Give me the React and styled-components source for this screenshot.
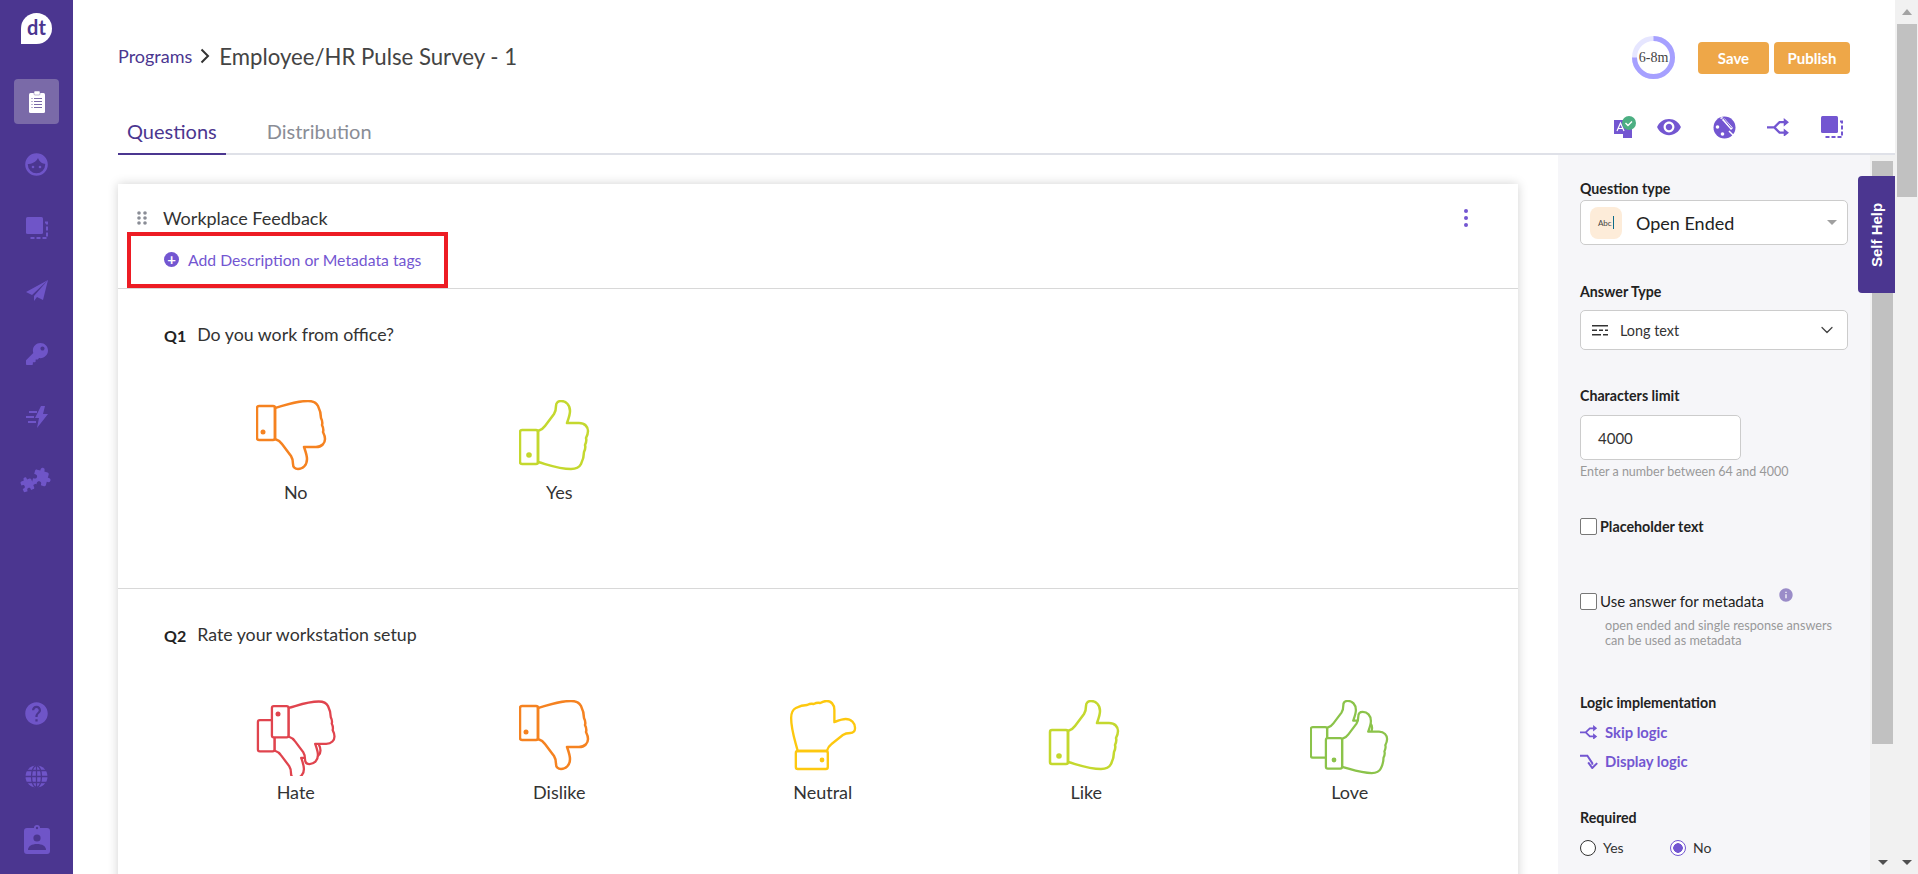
import styled, { createGlobalStyle } from 'styled-components';
import { FaKey } from 'react-icons/fa';
import { MdHelp, MdVisibility, MdInfo, MdExtension } from 'react-icons/md';
import { ChevronDown } from 'lucide-react';

//Survey builder screen: sidebar, header, question card and the settings panel.

const PURPLE = '#7356d1';
const SIDE_ICON = '#6f55c8';
const NAVY = '#4b3690';

const HAND =
  'M19 31C22 30 24 29 26 26L35 14C37 11 37 8 37 6C37 3 39 1 42 1C47 1 51 5 51 11C51 15 49 20 48 23L60 23C66 23 69 27 69 31C69 34 68 36 67 38C68 41 67 43 66 45C67 48 66 50 65 52C65 56 64 60 62 64C60 68 57 69 52 69C40 69 30 65 19 62Z';

const Thumb = ({ transform, fill = 'none' }) => (
  <g transform={transform}>
    <path d={HAND} fill={fill} />
    <rect x="1" y="30" width="18" height="34" rx="2" fill={fill} />
  </g>
);

const FaceIcon = ({ kind, color }) => {
  const common = { fill: 'none', stroke: color, strokeWidth: 2.5, strokeLinejoin: 'round' };
  return (
    <svg width="80" height="76" viewBox="0 0 80 76">
      {kind === 'down' && (
        <g {...common}>
          <Thumb transform="matrix(1 0 0 -1 0 70)" />
          <circle cx="7" cy="32" r="2.500" fill={color} stroke="none" />
        </g>
      )}
      {kind === 'up' && (
        <g {...common}>
          <Thumb transform="translate(0 0)" />
          <circle cx="10" cy="55" r="2.800" fill={color} stroke="none" />
        </g>
      )}
      {kind === 'like' && (
        <g {...common}>
          <Thumb transform="translate(3 0)" />
          <circle cx="13" cy="56" r="2.800" fill={color} stroke="none" />
        </g>
      )}
      {kind === 'neutral' && (
        <g {...common}>
          <Thumb transform="matrix(0 -1 -.94 0 73 70)" />
          <circle cx="39" cy="60" r="2.400" fill={color} stroke="none" />
        </g>
      )}
      {kind === 'hate' && (
        <g {...common}>
          <Thumb transform="matrix(.92 0 0 -.92 1 79)" fill="#fff" />
          <Thumb transform="matrix(.92 0 0 -.92 15 65)" fill="#fff" />
          <circle cx="22" cy="14" r="2.500" fill={color} stroke="none" />
        </g>
      )}
      {kind === 'love' && (
        <g {...common}>
          <Thumb transform="matrix(.9 0 0 .9 0 0)" fill="#fff" />
          <Thumb transform="matrix(.9 0 0 .9 15 11)" fill="#fff" />
          <circle cx="24" cy="60" r="2.400" fill={color} stroke="none" />
        </g>
      )}
    </svg>
  );
};

const CopyIcon = ({ color, size }) => (
  <svg width={size} height={size} viewBox="0 0 22 22">
    <rect x="0" y="0" width="17" height="17" rx="1.5" fill={color} />
    <path d="M19 5.5h2V21H5.5v-2.5" fill="none" stroke={color} strokeWidth="2" strokeDasharray="4 2" />
  </svg>
);

const BranchIcon = ({ color, size }) => (
  <svg width={size} height={size * 0.82} viewBox="0 0 22 18" fill="none" stroke={color} strokeWidth="2.2">
    <path d="M0 9h7l5-5h5M7 9l5 5h5" />
    <path d="M16 0l5 4-5 4zM16 10l5 4-5 4z" fill={color} stroke="none" />
  </svg>
);

const DisplayIcon = () => (
  <svg width="18" height="15" viewBox="0 0 22 18" fill="none" stroke={PURPLE} strokeWidth="2.4">
    <path d="M0 2h9l6 9v2" />
    <path d="M10 10l5 7 6-6" />
  </svg>
);

const PlaneIcon = () => (
  <svg width="22" height="22" viewBox="0 0 22 22" fill={SIDE_ICON}>
    <path d="M22 0L0 12l6 3zM22 0L8 16v5l3-4 6 3z" />
  </svg>
);

const FaceNavIcon = () => (
  <svg width="23" height="23" viewBox="0 0 23 23">
    <circle cx="11.5" cy="11.5" r="10" fill="none" stroke={SIDE_ICON} strokeWidth="2.6" />
    <path d="M2 11C7 11 11 9 13 5c1 3 4 6 8 6A9.500 9.500 0 0 0 2 11z" fill={SIDE_ICON} />
    <circle cx="8" cy="14" r="1.300" fill={SIDE_ICON} />
    <circle cx="15" cy="14" r="1.300" fill={SIDE_ICON} />
  </svg>
);

const BoltIcon = () => (
  <svg width="22" height="22" viewBox="0 0 22 22" fill={SIDE_ICON}>
    <path d="M15 0L9 12h4l-2 10 11-14h-5l2-8z" />
    <path d="M3 5h8v2H3zM0 10h8v2H0zM2 15h8v2H2z" />
  </svg>
);

const GlobeIcon = () => (
  <svg width="23" height="23" viewBox="0 0 23 23">
    <circle cx="11.5" cy="11.5" r="11" fill={SIDE_ICON} />
    <g fill="none" stroke={NAVY} strokeWidth="1.300">
      <ellipse cx="11.5" cy="11.5" rx="5" ry="11" />
      <path d="M11.500 0v23M0 11.500h23M2 5.500h19M2 17.500h19" />
    </g>
  </svg>
);

const BadgeIcon = () => (
  <svg width="26" height="29" viewBox="0 0 26 29">
    <path
      d="M3 3h7a3 3 0 0 1 6 0h7a3 3 0 0 1 3 3v20a3 3 0 0 1-3 3H3a3 3 0 0 1-3-3V6a3 3 0 0 1 3-3z"
      fill={SIDE_ICON}
    />
    <circle cx="13" cy="3" r="1.200" fill={NAVY} />
    <circle cx="13" cy="13" r="3.600" fill={NAVY} />
    <path d="M4 25c0-4 4-6 9-6s9 2 9 6z" fill={NAVY} />
  </svg>
);

const ClipboardIcon = () => (
  <svg width="16" height="22" viewBox="0 0 16 22">
    <rect x="0" y="2" width="16" height="20" rx="1.5" fill="#fff" />
    <rect x="5" y="0" width="6" height="4" rx="1" fill="#fff" stroke="#7a6aa8" strokeWidth=".5" />
    <path d="M5 7.500h8M5 10.500h8M5 13.500h8M5 16.500h8M2.500 7.500h1M2.500 10.500h1M2.500 13.500h1M2.500 16.500h1" stroke="#7a6aa8" strokeWidth="1" />
  </svg>
);

const TranslateIcon = () => (
  <svg width="23" height="22" viewBox="0 0 23 22">
    <rect x="0" y="4" width="13" height="14" fill={PURPLE} />
    <rect x="9" y="10" width="9" height="12" fill={PURPLE} />
    <path d="M3 15l3.500-8L10 15M4.500 12.500h4" fill="none" stroke="#fff" strokeWidth="1.200" />
    <circle cx="15" cy="7" r="7" fill="#4caf82" />
    <path d="M11.500 7l2.500 2.500 4-4" fill="none" stroke="#fff" strokeWidth="1.400" />
  </svg>
);

const PaletteIcon = () => (
  <svg width="23" height="23" viewBox="0 0 23 23">
    <circle cx="11.5" cy="11.5" r="11" fill={PURPLE} />
    <circle cx="4.500" cy="11" r="1.800" fill="#fff" />
    <circle cx="9.500" cy="18" r="1.800" fill="#fff" />
    <path d="M7 2l2-1 3 2 8 9-2 2-8-9z" fill="#fff" />
    <path d="M8 3.500l2.500-1 8 9.500" fill="none" stroke={PURPLE} strokeWidth="1" />
    <path d="M16 15l5 5" stroke="#fff" strokeWidth="1.500" />
  </svg>
);

const TimeRing = () => (
  <svg width="43" height="43" viewBox="0 0 43 43">
    <circle cx="21.5" cy="21.5" r="19" fill="none" stroke="#e6e6ff" strokeWidth="5" />
    <circle
      cx="21.5"
      cy="21.5"
      r="19"
      fill="none"
      stroke="#a6a0ff"
      strokeWidth="5"
      pathLength="100"
      strokeDasharray="75 25"
      transform="rotate(-90 21.5 21.5)"
    />
  </svg>
);

const DragDots = () => (
  <svg width="10" height="14" viewBox="0 0 10 14" fill="#8a8d96">
    <circle cx="2" cy="2" r="1.800" />
    <circle cx="8" cy="2" r="1.800" />
    <circle cx="2" cy="7" r="1.800" />
    <circle cx="8" cy="7" r="1.800" />
    <circle cx="2" cy="12" r="1.800" />
    <circle cx="8" cy="12" r="1.800" />
  </svg>
);

const PuzzleIcon = () => (
  <PuzzlePair>
    <MdExtension size={16} color={SIDE_ICON} />
    <MdExtension size={20} color={SIDE_ICON} />
  </PuzzlePair>
);

const NAV = [
  { id: 'programs', icon: <ClipboardIcon />, active: true },
  { id: 'people', icon: <FaceNavIcon /> },
  { id: 'templates', icon: <CopyIcon color={SIDE_ICON} size={22} /> },
  { id: 'send', icon: <PlaneIcon /> },
  { id: 'keys', icon: <FaKey size={22} color={SIDE_ICON} /> },
  { id: 'automation', icon: <BoltIcon /> },
  { id: 'integrations', icon: <PuzzleIcon /> },
];

const QUESTIONS = [
  {
    id: 'Q1',
    text: 'Do you work from office?',
    options: [
      { label: 'No', kind: 'down', color: '#f58220' },
      { label: 'Yes', kind: 'up', color: '#c4d82e' },
    ],
  },
  {
    id: 'Q2',
    text: 'Rate your workstation setup',
    options: [
      { label: 'Hate', kind: 'hate', color: '#e0444e' },
      { label: 'Dislike', kind: 'down', color: '#f58220' },
      { label: 'Neutral', kind: 'neutral', color: '#fdc80f' },
      { label: 'Like', kind: 'like', color: '#c4d82e' },
      { label: 'Love', kind: 'love', color: '#8bc34a' },
    ],
  },
];

export default function App() {
  return (
    <Page>
      <GlobalStyle />
      <Sidebar>
        <div>
          <Logo>dt</Logo>
          <NavList>
            {NAV.map((item) => (
              <NavItem key={item.id}>
                <NavTile $active={item.active}>{item.icon}</NavTile>
              </NavItem>
            ))}
          </NavList>
        </div>
        <BottomNav>
          <BottomItem>
            <MdHelp size={27} color={SIDE_ICON} />
          </BottomItem>
          <BottomItem>
            <GlobeIcon />
          </BottomItem>
          <BottomItem>
            <BadgeIcon />
          </BottomItem>
        </BottomNav>
      </Sidebar>

      <Main>
        <Header>
          <TopRow>
            <Crumbs>
              <CrumbLink>Programs</CrumbLink>
              <CrumbArrow viewBox="0 0 10 16" width="10" height="16">
                <path d="M1.500 1.500L8 8l-6.500 6.500" fill="none" stroke="#333" strokeWidth="2" />
              </CrumbArrow>
              <PageTitle>Employee/HR Pulse Survey - 1</PageTitle>
            </Crumbs>
            <Actions>
              <Ring>
                <TimeRing />
                <RingText>6-8m</RingText>
              </Ring>
              <ActionButton>Save</ActionButton>
              <ActionButton $wide>Publish</ActionButton>
            </Actions>
          </TopRow>
          <TabRow>
            <Tabs>
              <Tab $active>Questions</Tab>
              <Tab>Distribution</Tab>
            </Tabs>
            <Tools>
              <TranslateSlot>
                <TranslateIcon />
              </TranslateSlot>
              <MdVisibility size={26} color={PURPLE} />
              <PaletteIcon />
              <BranchIcon color={PURPLE} size={23} />
              <CopyIcon color={PURPLE} size={22} />
            </Tools>
          </TabRow>
        </Header>

        <Body>
          <Content>
            <Card>
              <CardHead>
                <TitleRow>
                  <DragDots />
                  <SectionTitle>Workplace Feedback</SectionTitle>
                  <Kebab>
                    <i />
                    <i />
                    <i />
                  </Kebab>
                </TitleRow>
                <AddMeta>
                  <PlusDot>+</PlusDot>
                  <span>Add Description or Metadata tags</span>
                </AddMeta>
              </CardHead>
              {QUESTIONS.map((q) => (
                <Question key={q.id}>
                  <QuestionLine>
                    <QuestionId>{q.id}</QuestionId>
                    <QuestionText>{q.text}</QuestionText>
                  </QuestionLine>
                  <Options>
                    {q.options.map((o) => (
                      <Option key={o.label}>
                        <FaceIcon kind={o.kind} color={o.color} />
                        <OptionLabel>{o.label}</OptionLabel>
                      </Option>
                    ))}
                  </Options>
                </Question>
              ))}
            </Card>
          </Content>

          <Panel>
            <PanelLabel>Question type</PanelLabel>
            <TypeSelect>
              <AbcTile>
                Abc<b />
              </AbcTile>
              <TypeName>Open Ended</TypeName>
              <Caret />
            </TypeSelect>

            <PanelLabel $top={38}>Answer Type</PanelLabel>
            <AnswerSelect>
              <svg width="16" height="11" viewBox="0 0 16 11" fill="#333">
                <path d="M0 0h16v1.500H0zM0 4.500h5V6H0zM7 4.500h4V6H7zM13 4.500h3V6h-3zM0 9h9v1.500H0zM11 9h5v1.500h-5z" />
              </svg>
              <AnswerName>Long text</AnswerName>
              <ChevronDown size={20} strokeWidth={1.5} color="#444" />
            </AnswerSelect>

            <PanelLabel $top={37}>Characters limit</PanelLabel>
            <LimitInput>4000</LimitInput>
            <Hint>Enter a number between 64 and 4000</Hint>

            <CheckRow $top={39}>
              <CheckBox />
              <CheckLabel $strong>Placeholder text</CheckLabel>
            </CheckRow>

            <CheckRow $top={57}>
              <CheckBox />
              <CheckLabel>Use answer for metadata</CheckLabel>
              <InfoBadge>
                <MdInfo size={16} color="#9a8cc8" />
              </InfoBadge>
            </CheckRow>
            <CheckHelp>
              open ended and single response answers
              <br />
              can be used as metadata
            </CheckHelp>

            <PanelLabel $top={46}>Logic implementation</PanelLabel>
            <LogicLink $top={10}>
              <BranchIcon color={PURPLE} size={18} />
              <span>Skip logic</span>
            </LogicLink>
            <LogicLink $top={9}>
              <DisplayIcon />
              <span>Display logic</span>
            </LogicLink>

            <PanelLabel $top={38}>Required</PanelLabel>
            <RadioRow>
              <RadioItem>
                <Radio />
                Yes
              </RadioItem>
              <RadioItem>
                <Radio $on />
                No
              </RadioItem>
            </RadioRow>
          </Panel>

          <InnerBar>
            <InnerThumb />
            <ArrowDown />
          </InnerBar>

          <SelfHelp>Self Help</SelfHelp>
        </Body>
      </Main>

      <OuterBar>
        <ArrowUp />
        <OuterThumb />
        <ArrowDown />
      </OuterBar>
    </Page>
  );
}

//STYLING
const GlobalStyle = createGlobalStyle`
  html, body {
    margin: 0;
    height: 100%;
    overflow: hidden;
    background: #fff;
    font-family: Lato, 'Open Sans', sans-serif;
    color: #333;
  }
`;

const Page = styled.div`
  display: flex;
  width: 1918px;
  height: 874px;
  overflow: hidden;
`;

const Sidebar = styled.aside`
  width: 73px;
  flex: none;
  background: ${NAVY};
  display: flex;
  flex-direction: column;
  justify-content: space-between;
  padding-bottom: 3px;
  box-sizing: border-box;
`;

const Logo = styled.div`
  width: 31px;
  height: 31px;
  margin: 13px 0 26px 21px;
  background: #fff;
  border-radius: 50% 50% 50% 0;
  color: ${NAVY};
  font-size: 20px;
  font-weight: 700;
  line-height: 29px;
  text-align: center;
`;

const NavList = styled.nav`
  display: flex;
  flex-direction: column;
`;

const NavItem = styled.div`
  height: 63px;
  display: flex;
  align-items: center;
  justify-content: center;
`;

const NavTile = styled.div`
  width: 45px;
  height: 45px;
  border-radius: 4px;
  display: flex;
  align-items: center;
  justify-content: center;
  background: ${(p) => (p.$active ? '#7a6aa8' : 'transparent')};
`;

const PuzzlePair = styled.span`
  display: flex;
  align-items: flex-end;
  margin-left: -2px;

  svg:first-child {
    margin-right: -4px;
    transform: rotate(-20deg);
  }
  svg:last-child {
    margin-bottom: 5px;
    transform: rotate(15deg);
  }
`;

const BottomNav = styled.div`
  display: flex;
  flex-direction: column;
`;

const BottomItem = styled.div`
  height: 63px;
  display: flex;
  align-items: center;
  justify-content: center;
`;

const Main = styled.main`
  flex: 1;
  min-width: 0;
  display: flex;
  flex-direction: column;
`;

const Header = styled.header`
  height: 155px;
  flex: none;
  padding-left: 45px;
  display: flex;
  flex-direction: column;
`;

const TopRow = styled.div`
  height: 94px;
  display: flex;
  justify-content: space-between;
  align-items: flex-start;
  padding: 36px 45px 0 0;
  box-sizing: border-box;
`;

const Crumbs = styled.div`
  display: flex;
  align-items: center;
  height: 40px;
`;

const CrumbLink = styled.span`
  color: ${NAVY};
  font-size: 18px;
`;

const CrumbArrow = styled.svg`
  margin: 0 9px 0 8px;
`;

const PageTitle = styled.h1`
  margin: 0;
  font-size: 22.2px;
  font-weight: 400;
  color: #444;
`;

const Actions = styled.div`
  display: flex;
  align-items: flex-start;
`;

const Ring = styled.div`
  position: relative;
  width: 43px;
  height: 43px;
  margin-right: 23px;
`;

const RingText = styled.span`
  position: absolute;
  inset: 0;
  display: flex;
  align-items: center;
  justify-content: center;
  font-family: 'Liberation Serif', serif;
  font-size: 14px;
  color: #444;
`;

const ActionButton = styled.button`
  width: ${(p) => (p.$wide ? 76 : 71)}px;
  height: 32px;
  margin: 6px 0 0 ${(p) => (p.$wide ? 5 : 0)}px;
  border: 0;
  border-radius: 4px;
  background: #eea748;
  color: #fff;
  font-family: inherit;
  font-size: 15px;
  font-weight: 700;
  padding: 0;
`;

const TabRow = styled.div`
  flex: 1;
  display: flex;
  justify-content: space-between;
  border-bottom: 2px solid #dfe1e8;
`;

const Tabs = styled.div`
  display: flex;
  gap: 32px;
`;

const Tab = styled.div`
  padding: 15px 9px 0;
  margin-bottom: -2px;
  display: flex;
  align-items: center;
  font-size: 20px;
  color: ${(p) => (p.$active ? NAVY : '#8a8d96')};
  border-bottom: 2px solid ${(p) => (p.$active ? NAVY : 'transparent')};
`;

const Tools = styled.div`
  display: flex;
  align-items: center;
  gap: 31px;
  padding: 7px 52px 0 0;
`;

const TranslateSlot = styled.span`
  display: flex;
  margin-right: -12px;
`;

const Body = styled.div`
  position: relative;
  flex: 1;
  min-height: 0;
  display: flex;
`;

const Content = styled.div`
  flex: 1;
  min-width: 0;
  padding: 29px 40px 0 45px;
  overflow: hidden;
`;

const Card = styled.section`
  background: #fff;
  box-shadow: 0 0 10px rgba(0, 0, 0, 0.18);
`;

const CardHead = styled.div`
  padding-top: 22px;
  border-bottom: 1px solid #d8d8d8;
`;

const TitleRow = styled.div`
  height: 24px;
  padding: 0 50px 0 19px;
  display: flex;
  align-items: center;
  gap: 16px;
`;

const SectionTitle = styled.div`
  flex: 1;
  font-size: 18px;
  color: #333;
`;

const Kebab = styled.div`
  display: flex;
  flex-direction: column;
  gap: 3px;

  i {
    display: block;
    width: 4px;
    height: 4px;
    border-radius: 50%;
    background: ${PURPLE};
  }
`;

const AddMeta = styled.div`
  box-sizing: border-box;
  width: 321px;
  height: 56px;
  margin: 2px 0 0 9px;
  padding: 0 0 2px 33px;
  border: 4px solid #ed1c24;
  display: flex;
  align-items: center;
  gap: 9px;
  font-size: 15.75px;
  color: ${PURPLE};
`;

const PlusDot = styled.span`
  width: 15px;
  height: 15px;
  border-radius: 50%;
  background: ${PURPLE};
  color: #fff;
  font-size: 15px;
  font-weight: 700;
  line-height: 14px;
  text-align: center;
`;

const Question = styled.div`
  height: 300px;
  box-sizing: border-box;
  padding: 34px 0 0 46px;
  border-bottom: 1px solid #d8d8d8;
`;

const QuestionLine = styled.div`
  display: flex;
  align-items: center;
  gap: 11px;
  height: 24px;
`;

const QuestionId = styled.b`
  font-size: 16px;
  color: #222;
`;

const QuestionText = styled.span`
  margin-top: -3px;
  font-size: 17.75px;
  color: #333;
`;

const Options = styled.div`
  display: grid;
  grid-template-columns: repeat(5, 263.5px);
  margin-top: 53px;
`;

const Option = styled.div`
  display: flex;
  flex-direction: column;
  align-items: center;
`;

const OptionLabel = styled.div`
  margin-top: 6px;
  font-size: 18px;
  line-height: 20px;
  color: #333;
`;

const Panel = styled.aside`
  width: 312px;
  flex: none;
  box-sizing: border-box;
  background: #f6f6f9;
  padding: 25px 22px 0;
`;

const PanelLabel = styled.div`
  margin-top: ${(p) => p.$top || 0}px;
  font-size: 14.2px;
  line-height: 18px;
  font-weight: 700;
  color: #222;
`;

const selectBox = `
  box-sizing: border-box;
  display: flex;
  align-items: center;
  width: 268px;
  background: #fff;
  border: 1px solid #ccc;
  border-radius: 5px;
`;

const TypeSelect = styled.div`
  ${selectBox}
  height: 45px;
  margin-top: 2px;
  padding: 0 10px 0 9px;
`;

const AbcTile = styled.div`
  width: 32px;
  height: 32px;
  border-radius: 8px;
  background: #fdecd9;
  display: flex;
  align-items: center;
  justify-content: center;
  gap: 1px;
  font-size: 8px;
  color: #444;

  b {
    width: 1.5px;
    height: 13px;
    background: #0b6b8a;
  }
`;

const TypeName = styled.div`
  flex: 1;
  margin-left: 14px;
  font-size: 18px;
  color: #222;
`;

const Caret = styled.span`
  width: 0;
  height: 0;
  border-left: 5px solid transparent;
  border-right: 5px solid transparent;
  border-top: 5px solid #a0a0a0;
`;

const AnswerSelect = styled.div`
  ${selectBox}
  height: 40px;
  margin-top: 9px;
  padding: 0 10px 0 11px;
`;

const AnswerName = styled.div`
  flex: 1;
  margin-left: 12px;
  font-size: 14.4px;
  color: #333;
`;

const LimitInput = styled.div`
  box-sizing: border-box;
  width: 161px;
  height: 45px;
  margin-top: 10px;
  padding-left: 17px;
  display: flex;
  align-items: center;
  background: #fff;
  border: 1px solid #ccc;
  border-radius: 5px;
  font-size: 15px;
  color: #333;
`;

const Hint = styled.div`
  margin-top: 5px;
  font-size: 12.5px;
  line-height: 14px;
  color: #999;
`;

const CheckRow = styled.div`
  margin-top: ${(p) => p.$top}px;
  display: flex;
  align-items: center;
  gap: 3px;
`;

const CheckBox = styled.span`
  box-sizing: border-box;
  width: 17px;
  height: 17px;
  background: #fff;
  border: 1px solid #777;
  border-radius: 2px;
`;

const CheckLabel = styled.span`
  font-size: ${(p) => (p.$strong ? 14.3 : 15)}px;
  font-weight: ${(p) => (p.$strong ? 700 : 400)};
  color: #222;
`;

const InfoBadge = styled.span`
  display: flex;
  margin: -12px 0 0 11px;
`;

const CheckHelp = styled.div`
  margin: 8px 0 0 25px;
  font-size: 12.7px;
  line-height: 15px;
  color: #999;
`;

const LogicLink = styled.div`
  margin-top: ${(p) => p.$top}px;
  height: 20px;
  display: flex;
  align-items: center;
  gap: 7px;
  font-size: 14.8px;
  font-weight: 700;
  color: ${PURPLE};
`;

const RadioRow = styled.div`
  display: flex;
  margin-top: 12px;
`;

const RadioItem = styled.label`
  width: 90px;
  display: flex;
  align-items: center;
  gap: 7px;
  font-size: 14px;
  color: #333;
`;

const Radio = styled.span`
  box-sizing: border-box;
  width: 16px;
  height: 16px;
  border-radius: 50%;
  border: 1px solid ${(p) => (p.$on ? PURPLE : '#333')};
  background: ${(p) => (p.$on ? `radial-gradient(circle, ${PURPLE} 4.5px, #fff 5px)` : '#fff')};
`;

const InnerBar = styled.div`
  width: 25px;
  flex: none;
  box-sizing: border-box;
  padding: 6px 2px 0 2px;
  background: #f1f1f1;
  display: flex;
  flex-direction: column;
  align-items: center;
`;

const InnerThumb = styled.div`
  width: 21px;
  height: 583px;
  background: #c1c1c1;
`;

const ArrowDown = styled.span`
  width: 0;
  height: 0;
  margin-top: auto;
  margin-bottom: 9px;
  border-left: 5px solid transparent;
  border-right: 5px solid transparent;
  border-top: 5px solid #505050;
`;

const ArrowUp = styled.span`
  width: 0;
  height: 0;
  margin: 9px 0 9px;
  border-left: 5px solid transparent;
  border-right: 5px solid transparent;
  border-bottom: 6px solid #a3a3a3;
`;

const SelfHelp = styled.div`
  position: absolute;
  top: 21px;
  right: 0;
  width: 37px;
  height: 117px;
  background: ${NAVY};
  border-radius: 0 4px 4px 0;
  display: flex;
  align-items: center;
  justify-content: center;
  writing-mode: vertical-rl;
  transform: rotate(180deg);
  font-family: 'Liberation Sans', sans-serif;
  font-size: 15px;
  font-weight: 700;
  color: #fff;
`;

const OuterBar = styled.div`
  width: 23px;
  flex: none;
  box-sizing: border-box;
  padding: 0 1px 0 2px;
  background: #f1f1f1;
  display: flex;
  flex-direction: column;
  align-items: center;
`;

const OuterThumb = styled.div`
  width: 20px;
  height: 173px;
  background: #c1c1c1;
`;
